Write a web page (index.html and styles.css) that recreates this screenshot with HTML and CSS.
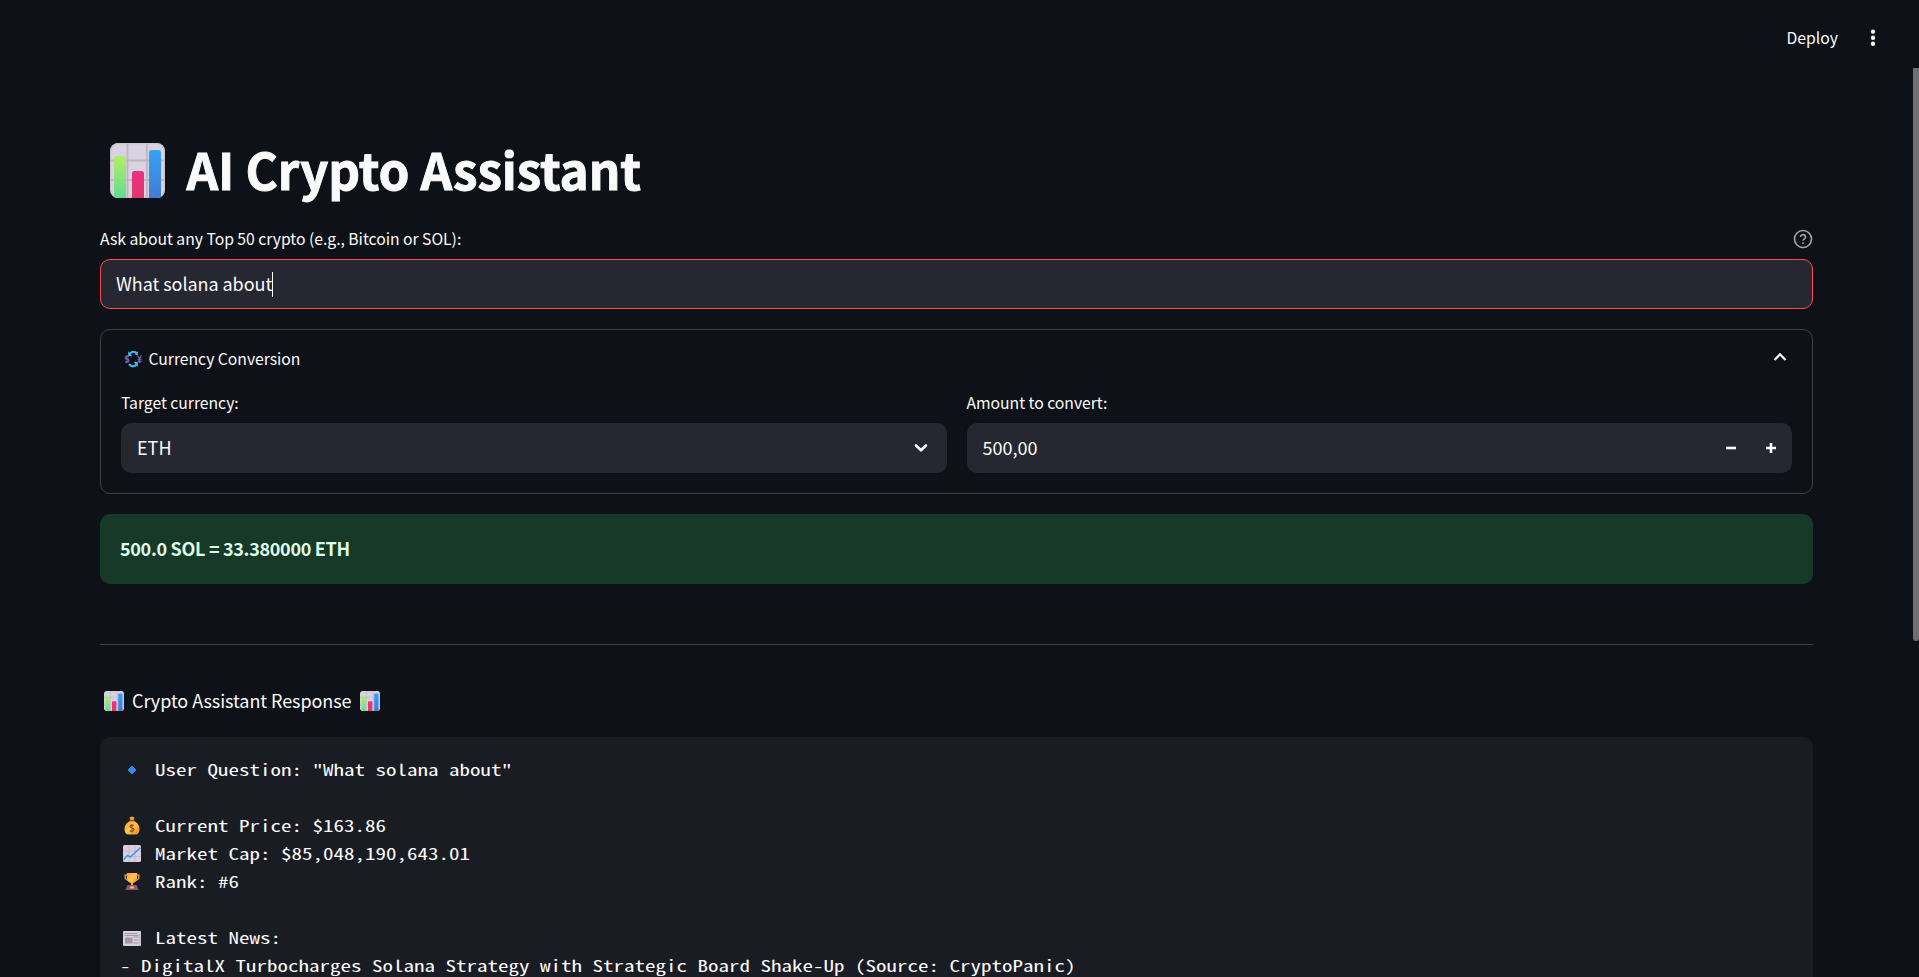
FILE: index.html
```html
<!DOCTYPE html>
<html lang="en">
<head>
<meta charset="utf-8">
<title>AI Crypto Assistant</title>
<link rel="stylesheet" href="styles.css">
</head>
<body>
<svg class="defs" aria-hidden="true">
  <defs>
    <linearGradient id="green" x1="0" y1="0" x2="0" y2="1"><stop offset="0" stop-color="#b4ee63"/><stop offset="1" stop-color="#62dc94"/></linearGradient>
    <linearGradient id="blue" x1="0" y1="0" x2="0" y2="1"><stop offset="0" stop-color="#34a3f7"/><stop offset="1" stop-color="#427bd0"/></linearGradient>
    <linearGradient id="pink" x1="0" y1="0" x2="0" y2="1"><stop offset="0" stop-color="#ea2f87"/><stop offset="1" stop-color="#e0386b"/></linearGradient>
    <linearGradient id="gold" x1="0" y1="0" x2="1" y2="1"><stop offset="0" stop-color="#f6a43a"/><stop offset=".5" stop-color="#ffc44c"/><stop offset="1" stop-color="#e8802c"/></linearGradient>
    <clipPath id="tile"><rect width="55" height="55" rx="8"/></clipPath>
    <symbol id="bars" viewBox="0 0 55 55">
      <g clip-path="url(#tile)">
      <rect width="55" height="55" fill="#d9d2e0"/>
      <path d="M17.500 0v55M37 0v55M0 17.500h55M0 37h55" stroke="#bcb6c2" stroke-width="1.800"/>
      <rect x=".7" y=".7" width="53.600" height="53.600" rx="7.500" fill="none" stroke="#c8c0d0" stroke-width="1"/>
      <path d="M4 55V15.500q0-2.500 2.500-2.500h7q2.500 0 2.500 2.500V55z" fill="url(#green)"/>
      <path d="M22 55V30.500q0-2.500 2.500-2.500h7q2.500 0 2.500 2.500V55z" fill="url(#pink)"/>
      <path d="M39 55V9.500q0-2.500 2.500-2.500h7q2.500 0 2.500 2.500V55z" fill="url(#blue)"/>
      </g>
    </symbol>
  </defs>
</svg>

<header class="toolbar">
  <span class="deploy">Deploy</span>
  <svg class="kebab" viewBox="0 0 6 18"><circle cx="3" cy="2.600" r="2.200"/><circle cx="3" cy="8.700" r="2.200"/><circle cx="3" cy="14.800" r="2.200"/></svg>
</header>

<main class="main">
  <h1 class="title"><svg class="title-icon"><use href="#bars"/></svg><span>AI Crypto Assistant</span></h1>

  <div class="label-row">
    <label class="label ask">Ask about any Top 50 crypto (e.g., Bitcoin or SOL):</label>
    <svg class="help" viewBox="0 0 20 20"><circle cx="10" cy="10" r="8.500"/><path d="M7.500 8a2.500 2.300 0 1 1 3.800 1.900c-.9.600-1.300 1-1.300 1.900"/><path d="M10 13.200v1.800"/></svg>
  </div>
  <div class="field focused"><span class="value question">What solana about</span><i class="caret"></i></div>

  <section class="expander">
    <div class="summary">
      <svg class="exchange" viewBox="0 0 18 18">
        <g fill="none" stroke="#3fb8f0" stroke-width="2.200"><path d="M5 4.500Q9-.5 13 3.600"/><path d="M5 14.200Q9 18.500 13 14"/></g>
        <path d="M4.200 1v5h4zM13.800 17v-5h-4zM13.800 1v4h-3z" fill="#3fb8f0"/>
        <g fill="none" stroke="#6d60a8" stroke-width="1.300"><path d="M5 6.500H2Q.5 8 2 9h2q1.500 1.500 0 3H1M3 5v8"/><path d="M13.500 5.500l2 3 2-3M15.500 8.500V13M13.500 9.500h4M13.500 11.500h4"/></g>
      </svg>
      <span class="label currency">Currency Conversion</span>
      <svg class="chevron" viewBox="0 0 14 10"><path d="M1.500 8 7 2.300 12.500 8"/></svg>
    </div>
    <div class="columns">
      <div class="column">
        <label class="label target">Target currency:</label>
        <div class="field"><span class="value eth">ETH</span><svg class="chevron down" viewBox="0 0 14 10"><path d="M2 2.500 7 7.300 12 2.500"/></svg></div>
      </div>
      <div class="column">
        <label class="label amount">Amount to convert:</label>
        <div class="field"><span class="value number">500,00</span>
          <svg class="step minus" viewBox="0 0 10 10"><path d="M0 5h10"/></svg>
          <svg class="step" viewBox="0 0 10 10"><path d="M0 5h10M5 0v10"/></svg>
        </div>
      </div>
    </div>
  </section>

  <div class="alert"><strong>500.0 SOL = 33.380000 ETH</strong></div>
  <hr class="rule">
  <p class="response"><svg class="small-icon"><use href="#bars"/></svg><span>Crypto Assistant Response</span><svg class="small-icon"><use href="#bars"/></svg></p>

  <div class="code">
    <div class="line"><svg class="emoji" viewBox="0 0 22 22"><path d="M11 7l4 4-4 4-4-4z" fill="#3b86e0" stroke="#3b86e0" stroke-linejoin="round"/></svg><span class="mono">User Question: "What solana about"</span></div>
    <div class="line"></div>
    <div class="line"><svg class="emoji" viewBox="0 0 22 22"><path d="M8.500 2.500l2.500-1 2.500 1-1 3h-3z" fill="#f3a63b"/><path d="M9 6C5 8 3.500 11 3.500 14c0 4 2 5.500 4 5.500h7c2.500 0 4-2 4-5.500 0-3-1.500-6-5.500-8z" fill="url(#gold)"/><path d="M8.500 5.500h5" stroke="#86504a" stroke-width="1.600"/><path d="M13 10.500q-2-1-3.500 0t.5 2l2 .8q1.800 1 .5 2.300t-3.700.2M11 9v8.500" fill="none" stroke="#89501c" stroke-width="1.100"/></svg><span class="mono">Current Price: $163.86</span></div>
    <div class="line"><svg class="emoji" viewBox="0 0 22 22"><rect x="2" y="2" width="18" height="17" rx="1.500" fill="#d8d0e1"/><path d="M8 2v17M14 2v17M2 8h18M2 13.500h18" stroke="#c0b8ca" stroke-width=".8"/><path d="M2.500 17l4-4.500 3 1.500L19.500 4.500" fill="none" stroke="#4297dc" stroke-width="1.500"/></svg><span class="mono">Market Cap: $85,048,190,643.01</span></div>
    <div class="line"><svg class="emoji" viewBox="0 0 22 22"><path d="M6 4H4.200v3.500L7.500 10M16 4h1.800v3.500L14.500 10" fill="none" stroke="#d89a3a" stroke-width="1.400"/><path d="M6 2h10v5c0 3-2 4.500-4 5v3h-2v-3c-2-.5-4-2-4-5z" fill="url(#gold)"/><path d="M6.500 14h9l2 5h-13z" fill="#91566a"/><rect x="9" y="15.500" width="4" height="2" fill="#f8c456"/></svg><span class="mono">Rank: #6</span></div>
    <div class="line"></div>
    <div class="line"><svg class="emoji" viewBox="0 0 22 22"><rect x="2" y="4" width="18" height="15" rx="1" fill="#d9d1df"/><path d="M3.500 6.500h13M12.500 10h5M12.500 13h5M12.500 16h5M3.500 8.500h14" stroke="#9f96a6"/><rect x="4" y="10.500" width="7.500" height="6" fill="#a098a7"/><path d="M18.800 7v11" stroke="#b6adbe"/></svg><span class="mono">Latest News:</span></div>
    <div class="line"><span class="mono">- DigitalX Turbocharges Solana Strategy with Strategic Board Shake-Up (Source: CryptoPanic)</span></div>
  </div>
</main>
<div class="scroll-thumb"></div>
</body>
</html>
```

FILE: styles.css
```css
* { box-sizing: border-box; }
html { height: 977px; overflow: hidden; }
body { margin: 0; height: 977px; overflow: hidden; position: relative; background: #0e1117; color: #fafafa; font-family: "Noto Sans CJK SC", "Noto Sans", sans-serif; }
svg { flex: none; display: block; }
span, label { white-space: nowrap; }
.defs { position: absolute; width: 0; height: 0; }
.toolbar { height: 75px; padding-right: 43px; display: flex; align-items: center; justify-content: flex-end; gap: 32px; }
.deploy { font-size: 15.750px; line-height: 28px; }
.kebab { width: 6px; height: 18px; fill: #fafafa; }
.main { padding: 43px 106px 0 100px; }
.title { margin: 0; height: 106px; padding: 0 0 2px 10px; display: flex; align-items: center; gap: 21.500px; font-size: 49.500px; line-height: 66px; font-weight: 700; letter-spacing: -0.110px; -webkit-text-stroke: 0.900px #fafafa; }
.title span { padding-bottom: 2px; }
.title-icon { width: 55px; height: 55px; }
.label-row { height: 35px; display: flex; justify-content: space-between; padding-top: 1px; }
.label { font-size: 15.750px; line-height: 28px; display: block; letter-spacing: -0.040px; }
.help { width: 20px; height: 20px; margin-top: 4px; fill: none; stroke: #a3a4a7; stroke-width: 1.600; }
.field { height: 50px; border-radius: 10px; background: #262730; display: flex; align-items: center; padding: 0 16px; }
.focused { border: 1px solid #ff4b4b; padding: 0 15px; }
.value { font-size: 18px; line-height: 28px; padding-bottom: 2px; }
.question { letter-spacing: -0.050px; }
.caret { width: 1px; height: 25px; background: #fafafa; }
.expander { height: 165px; margin-top: 20px; border: 1px solid #3d4044; border-radius: 10px; padding: 15px 20px 0; }
.summary { display: flex; align-items: center; height: 28px; padding-left: 3px; }
.exchange { width: 18px; height: 18px; margin-right: 6.500px; }
.chevron { width: 14px; height: 10px; margin: 0 5px 4px auto; fill: none; stroke: #fafafa; stroke-width: 2.200; }
.down { margin: 0 3px 0 auto; stroke-width: 2.600; stroke-linecap: round; stroke-linejoin: round; }
.columns { display: grid; grid-template-columns: 1fr 1fr; gap: 20px; margin-top: 16px; }
.column .label { height: 34px; }
.minus { margin-left: auto; margin-right: 30px; }
.step { width: 10px; height: 10px; fill: none; stroke: #fafafa; stroke-width: 2.600; }
.alert { margin-top: 20px; height: 70px; border-radius: 10px; background: #173928; color: #dffde9; display: flex; align-items: center; padding-left: 20px; padding-bottom: 2px; font-size: 18px; }
.alert strong { font-weight: 700; white-space: nowrap; letter-spacing: -0.310px; }
.rule { height: 1px; border: 0; background: #3d4044; margin: 60px 0 0; }
.response { margin: 40px 0 0; height: 33px; padding: 0 0 1px 4px; display: flex; align-items: center; gap: 8px; font-size: 18px; line-height: 32px; }
.response span { padding-bottom: 2px; letter-spacing: -0.070px; }
.small-icon { width: 20px; height: 20px; }
.code { margin-top: 19px; height: 240px; padding-top: 19px; padding-left: 20px; border-radius: 10px 10px 0 0; background: #1a1c24; font-family: "Noto Sans Mono CJK SC", "Liberation Mono", monospace; font-size: 15.750px; }
.line { height: 28px; line-height: 28px; display: flex; align-items: center; white-space: pre; }
.mono { display: block; padding-bottom: 1px; line-height: 27px; transform: scaleX(1.3333); transform-origin: 0 50%; }
.emoji { width: 22px; height: 22px; margin: 0 11.500px 0 1px; }
.scroll-thumb { position: absolute; right: 0; top: 68px; width: 6px; height: 573px; background: #6e6e73; border-radius: 0 0 3px 3px; }
```
